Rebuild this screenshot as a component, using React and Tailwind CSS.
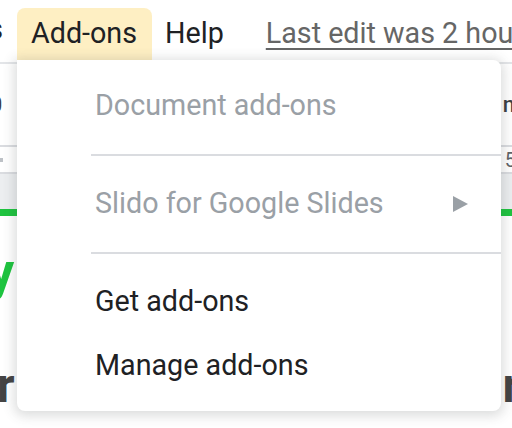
import React from 'react';

const font = { fontFamily: 'Roboto, "Noto Sans", Arial, sans-serif' };

const Divider = () => <div className="ml-[74px] my-[16px] h-[2px] bg-[#dadce0]" />;

const MenuItem = ({ label, disabled, submenu }) => (
    <div
        className={`h-[64px] flex items-center justify-between pl-[78px] pr-[33px] text-[28.7px] ${
            disabled ? 'text-[#9aa0a6]' : 'text-[#202124]'
        }`}
    >
        <span className="whitespace-nowrap">{label}</span>
        {submenu && (
            <svg width="15" height="16" viewBox="0 0 15 16" className="fill-[#9aa0a6]">
                <path d="M0 0 L15 8 L0 16 Z" />
            </svg>
        )}
    </div>
);

const App = () => {
    return (
        <div className="relative w-[512px] h-[428px] overflow-hidden bg-white" style={font}>
            {/* menu bar */}
            <div className="h-[60px] flex items-end text-[28.7px] text-[#202124] whitespace-nowrap">
                <div className="shrink-0 w-[17px] h-[60px] flex items-center justify-end overflow-hidden">
                    <span className="mr-[14px]">Tools</span>
                </div>
                <div className="shrink-0 h-[52px] pl-[14px] pr-[15px] flex items-center rounded-t-lg bg-[#feefc3]">
                    Add-ons
                </div>
                <div className="shrink-0 h-[52px] flex items-center ml-[13px]">Help</div>
                <div className="shrink-0 h-[52px] flex items-center ml-[42px] text-[#666] underline underline-offset-[5px] decoration-2">
                    Last edit was 2 hours ago
                </div>
            </div>

            {/* toolbar and ruler behind the menu */}
            <div className="mt-[2px] h-[2px] bg-[#e3e5e8]" />
            <div className="h-[81px] flex items-center justify-between text-[22px] text-[#3c4043]">
                <span className="-ml-[10px]">0</span>
                <span className="-mr-[3px] font-medium">n</span>
            </div>
            <div className="h-[2px] bg-[#dadce0]" />
            <div className="h-[25px] flex items-center justify-between text-[20px] text-[#5f6368]">
                <span className="-ml-[2px] w-[5px] h-[4px] bg-[#bdc1c6]" />
                <span className="-mr-[4px]">5</span>
            </div>
            <div className="h-[2px] bg-[#dadce0]" />
            <div className="h-[35px] bg-[#eceef0]" />
            <div className="h-[7px] bg-[#1ec43f]" />
            <div className="h-[82px] flex items-end text-[52px] font-bold leading-none text-[#1ec43f]">
                <span className="-ml-[12px]">y</span>
            </div>
            <div className="mt-[64px] flex justify-between text-[48px] font-bold leading-none text-[#444]">
                <span className="-ml-[3px]">r</span>
                <span className="-mr-[8px]">r</span>
            </div>

            {/* dropdown */}
            <div className="absolute left-[17px] top-[60px] w-[484px] pt-[14px] pb-[13px] bg-white rounded-b-lg rounded-tr-lg shadow-[0_2px_12px_3px_rgba(60,64,67,0.18)]">
                <MenuItem label="Document add-ons" disabled />
                <Divider />
                <MenuItem label="Slido for Google Slides" disabled submenu />
                <Divider />
                <MenuItem label="Get add-ons" />
                <MenuItem label="Manage add-ons" />
            </div>
        </div>
    );
};

export default App;
